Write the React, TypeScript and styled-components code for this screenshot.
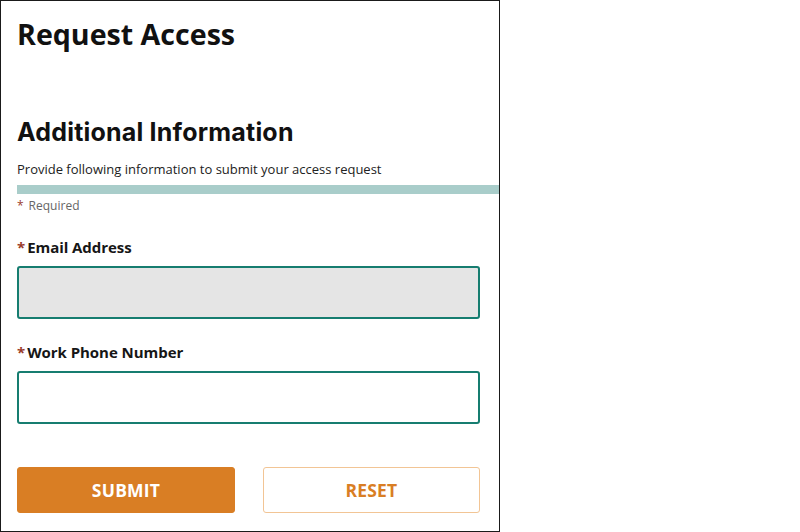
import React from "react";
import styled, { createGlobalStyle } from "styled-components";

const Global = createGlobalStyle`
  html, body { margin: 0; padding: 0; background: #fff; }
  * { box-sizing: border-box; }
`;

const Frame = styled.div`
  width: 500px;
  height: 532px;
  border: 1px solid #1a1a1a;
  padding: 0 19px 0 16px;
  display: flex;
  flex-direction: column;
  font-family: "Open Sans", sans-serif;
  color: #161616;
  overflow: hidden;
`;

const Title = styled.h1`
  margin: 14px 0 0 0;
  font-size: 28.6px;
  line-height: 38px;
  font-weight: 700;
  color: #111;
`;

const SectionTitle = styled.h2`
  margin: 63px 0 0 0;
  font-family: Inter, sans-serif;
  font-size: 25px;
  line-height: 32px;
  font-weight: 700;
  letter-spacing: 0.2px;
  color: #111;
`;

const Lead = styled.p`
  margin: 11px 0 0 0;
  font-size: 13px;
  line-height: 20px;
  color: #222;
`;

const Divider = styled.div`
  height: 9px;
  margin: 6px -19px 0 0;
  background: #a9cdca;
`;

const Required = styled.div`
  margin: 3px 0 0 0;
  font-size: 12px;
  line-height: 18px;
  color: #666;
`;

const Star = styled.span<{ $gap?: number }>`
  color: #9a3a2a;
  margin-right: ${(p) => p.$gap ?? 0}px;
`;

const Field = styled.div<{ $top: number }>`
  margin-top: ${(p) => p.$top}px;
  display: flex;
  flex-direction: column;
`;

const Label = styled.label`
  font-size: 15px;
  line-height: 22px;
  font-weight: 700;
  letter-spacing: -0.05px;
  color: #161616;
`;

const Input = styled.input<{ $disabled?: boolean }>`
  margin: 8px 0 0 0;
  height: 53px;
  width: 463px;
  border: 2px solid #167d70;
  border-radius: 3px;
  background: ${(p) => (p.$disabled ? "#e5e5e5" : "#fff")};
  font-family: "Open Sans", sans-serif;
  font-size: 15px;
  padding: 0 12px;
  outline: none;
`;

const Actions = styled.div`
  margin: 43px 0 0 0;
  display: grid;
  grid-template-columns: 218px 217px;
  column-gap: 28px;
`;

const Button = styled.button<{ $primary?: boolean }>`
  height: 46px;
  border-radius: 3px;
  font-family: "Open Sans", sans-serif;
  font-weight: 700;
  font-size: 17.5px;
  text-transform: uppercase;
  letter-spacing: 0.2px;
  cursor: pointer;
  border: 1px solid ${(p) => (p.$primary ? "#d97e24" : "#f2c595")};
  background: ${(p) => (p.$primary ? "#d97e24" : "#fff")};
  color: ${(p) => (p.$primary ? "#fff" : "#d97e24")};
`;

export default function App() {
  return (
    <>
      <Global />
      <Frame>
        <Title>Request Access</Title>
        <SectionTitle>Additional Information</SectionTitle>
        <Lead>Provide following information to submit your access request</Lead>
        <Divider />
        <Required>
          <Star $gap={5}>*</Star>Required
        </Required>
        <Field $top={21}>
          <Label>
            <Star $gap={2}>*</Star>Email Address
          </Label>
          <Input $disabled readOnly />
        </Field>
        <Field $top={22}>
          <Label>
            <Star $gap={2}>*</Star>Work Phone Number
          </Label>
          <Input />
        </Field>
        <Actions>
          <Button $primary>Submit</Button>
          <Button>Reset</Button>
        </Actions>
      </Frame>
    </>
  );
}
